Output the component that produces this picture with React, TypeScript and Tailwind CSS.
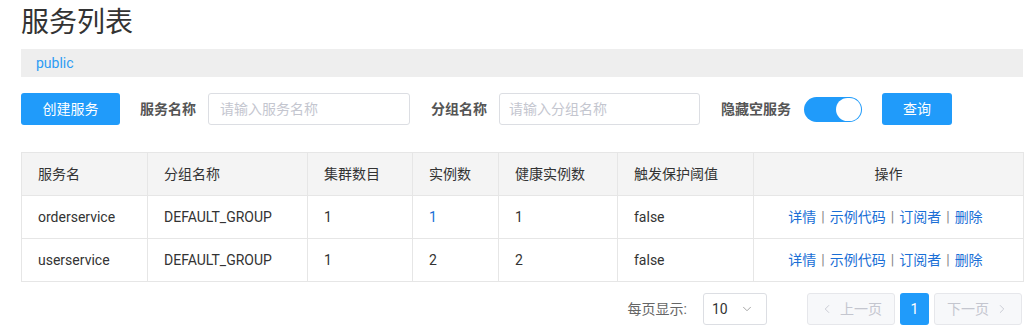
import { ChevronDown, ChevronLeft, ChevronRight } from 'lucide-react'

const rows = [
  { name: 'orderservice', group: 'DEFAULT_GROUP', clusters: '1', instances: '1', healthy: '1', threshold: 'false', link: true },
  { name: 'userservice', group: 'DEFAULT_GROUP', clusters: '1', instances: '2', healthy: '2', threshold: 'false', link: false },
]

const font = { fontFamily: 'Roboto, "Noto Sans CJK SC", sans-serif' }

function Actions() {
  return (
    <div className="flex items-center justify-center gap-[5px] text-[#1a6fd6] pr-[6px]">
      <span>详情</span>
      <span className="text-[#888]">|</span>
      <span>示例代码</span>
      <span className="text-[#888]">|</span>
      <span>订阅者</span>
      <span className="text-[#888]">|</span>
      <span>删除</span>
    </div>
  )
}

export default function App() {
  return (
    <div className="bg-white w-[1034px] h-[326px] overflow-hidden px-[21px] pt-[4px] text-[14px] text-[#333]" style={font}>
      <h1 className="text-[28px] leading-[38px] text-[#333] font-normal">服务列表</h1>
      <div className="mt-[7px] h-[28px] w-[1002px] bg-[#eeeeee] flex items-center pl-[15px] text-[14px] text-[#2d9cf4]">public</div>

      <div className="mt-[16px] flex items-center h-[32px]">
        <button className="h-[32px] w-[99px] rounded-[3px] bg-[#209bfa] text-white text-[14px]">创建服务</button>
        <span className="ml-[20px] font-bold text-[#555]">服务名称</span>
        <input className="ml-[12px] h-[32px] w-[202px] rounded-[3px] border border-[#dcdee3] px-[11px] text-[14px] placeholder:text-[#c4c6cf] outline-none" placeholder="请输入服务名称" />
        <span className="ml-[21px] font-bold text-[#555]">分组名称</span>
        <input className="ml-[12px] h-[32px] w-[201px] rounded-[3px] border border-[#dcdee3] px-[9px] text-[14px] placeholder:text-[#c4c6cf] outline-none" placeholder="请输入分组名称" />
        <span className="ml-[21px] font-bold text-[#555]">隐藏空服务</span>
        <div className="ml-[13px] h-[25px] w-[58px] rounded-full bg-[#209bfa] flex items-center justify-end pr-[1px]">
          <div className="h-[23px] w-[25px] rounded-full bg-white" />
        </div>
        <button className="ml-[20px] h-[32px] w-[70px] rounded-[3px] bg-[#209bfa] text-white text-[14px]">查询</button>
      </div>

      <table className="mt-[27px] w-[1002px] table-fixed border-collapse border border-[#e6e6e6]">
        <colgroup>
          <col className="w-[126px]" />
          <col className="w-[160px]" />
          <col className="w-[105px]" />
          <col className="w-[86px]" />
          <col className="w-[119px]" />
          <col className="w-[136px]" />
          <col className="w-[270px]" />
        </colgroup>
        <thead>
          <tr className="h-[43px] bg-[#f4f4f4]">
            {['服务名', '分组名称', '集群数目', '实例数', '健康实例数', '触发保护阈值'].map(h => (
              <th key={h} className="border border-[#e6e6e6] px-[16px] text-left font-normal text-[#333]">{h}</th>
            ))}
            <th className="border border-[#e6e6e6] text-center font-normal text-[#333]">操作</th>
          </tr>
        </thead>
        <tbody>
          {rows.map(r => (
            <tr key={r.name} className="h-[43px]">
              <td className="border border-[#e6e6e6] px-[16px]">{r.name}</td>
              <td className="border border-[#e6e6e6] px-[16px]">{r.group}</td>
              <td className="border border-[#e6e6e6] px-[16px]">{r.clusters}</td>
              <td className={`border border-[#e6e6e6] px-[16px] ${r.link ? 'text-[#1a6fd6]' : ''}`}>{r.instances}</td>
              <td className="border border-[#e6e6e6] px-[16px]">{r.healthy}</td>
              <td className="border border-[#e6e6e6] px-[16px]">{r.threshold}</td>
              <td className="border border-[#e6e6e6]"><Actions /></td>
            </tr>
          ))}
        </tbody>
      </table>

      <div className="mt-[11px] flex items-center justify-end h-[32px] w-[1001px]">
        <span className="text-[#666]">每页显示:</span>
        <div className="ml-[16px] h-[32px] w-[64px] rounded-[3px] border border-[#dcdee3] flex items-center justify-between pl-[8px] pr-[12px]">
          <span className="text-[#333]">10</span>
          <ChevronDown className="h-[14px] w-[14px] text-[#999]" strokeWidth={1.5} />
        </div>
        <button className="ml-[40px] h-[32px] w-[88px] rounded-[3px] border border-[#e6e7eb] bg-[#f7f8fa] text-[#c4c6cf] flex items-center justify-center gap-[6px]">
          <ChevronLeft className="h-[14px] w-[14px]" strokeWidth={1.5} />
          <span>上一页</span>
        </button>
        <button className="ml-[5px] h-[32px] w-[29px] rounded-[3px] bg-[#209bfa] text-white">1</button>
        <button className="ml-[5px] h-[32px] w-[88px] rounded-[3px] border border-[#e6e7eb] bg-[#f7f8fa] text-[#c4c6cf] flex items-center justify-center gap-[6px]">
          <span>下一页</span>
          <ChevronRight className="h-[14px] w-[14px]" strokeWidth={1.5} />
        </button>
      </div>
    </div>
  )
}
